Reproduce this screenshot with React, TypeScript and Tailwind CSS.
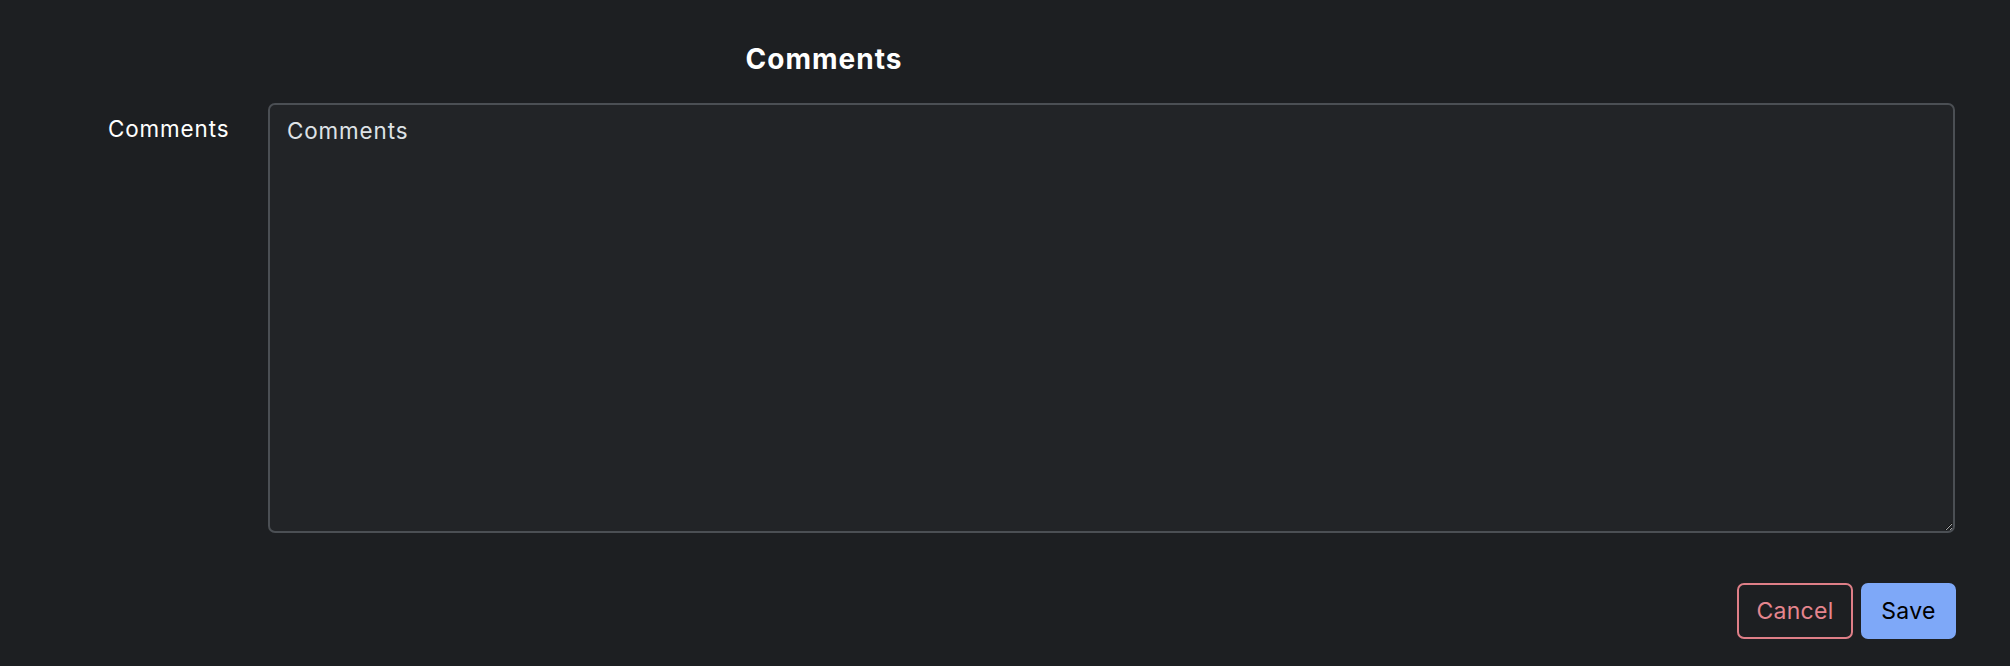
import React from "react";

export default function App() {
  return (
    <div className="w-[2010px] h-[666px] bg-[#1d1f22] text-white [color-scheme:dark] font-['Inter','Liberation_Sans',sans-serif] overflow-hidden">
      <div className="flex flex-col w-[1956px]">
        <div className="w-[1648px] pt-[42px] text-center text-[28px] leading-[34px] font-bold tracking-[1px] text-white">
          Comments
        </div>
        <div className="flex mt-[27px]">
          <label className="w-[268px] shrink-0 pl-[108px] pt-[9px] text-[22.4px] leading-[33.6px] tracking-[0.9px] text-white">
            Comments
          </label>
          <textarea
            placeholder="Comments"
            className="w-[1687px] h-[430px] rounded-[7px] border-2 border-[#4b4f54] bg-[#222427] px-[17px] pt-[9px] pb-[8px] text-[22.4px] leading-[33.6px] tracking-[0.9px] text-[#dee2e6] placeholder:text-[#dee2e6] outline-none"
          />
        </div>
        <div className="flex justify-end gap-[8px] mt-[50px]">
          <button className="w-[116px] h-[56px] rounded-[7px] border-2 border-[#df7f88] bg-transparent text-[23px] tracking-[0.3px] text-[#e5858e]">
            Cancel
          </button>
          <button className="w-[95px] h-[56px] rounded-[7px] bg-[#7ea8f8] text-[23px] tracking-[0.3px] text-black">
            Save
          </button>
        </div>
      </div>
    </div>
  );
}
